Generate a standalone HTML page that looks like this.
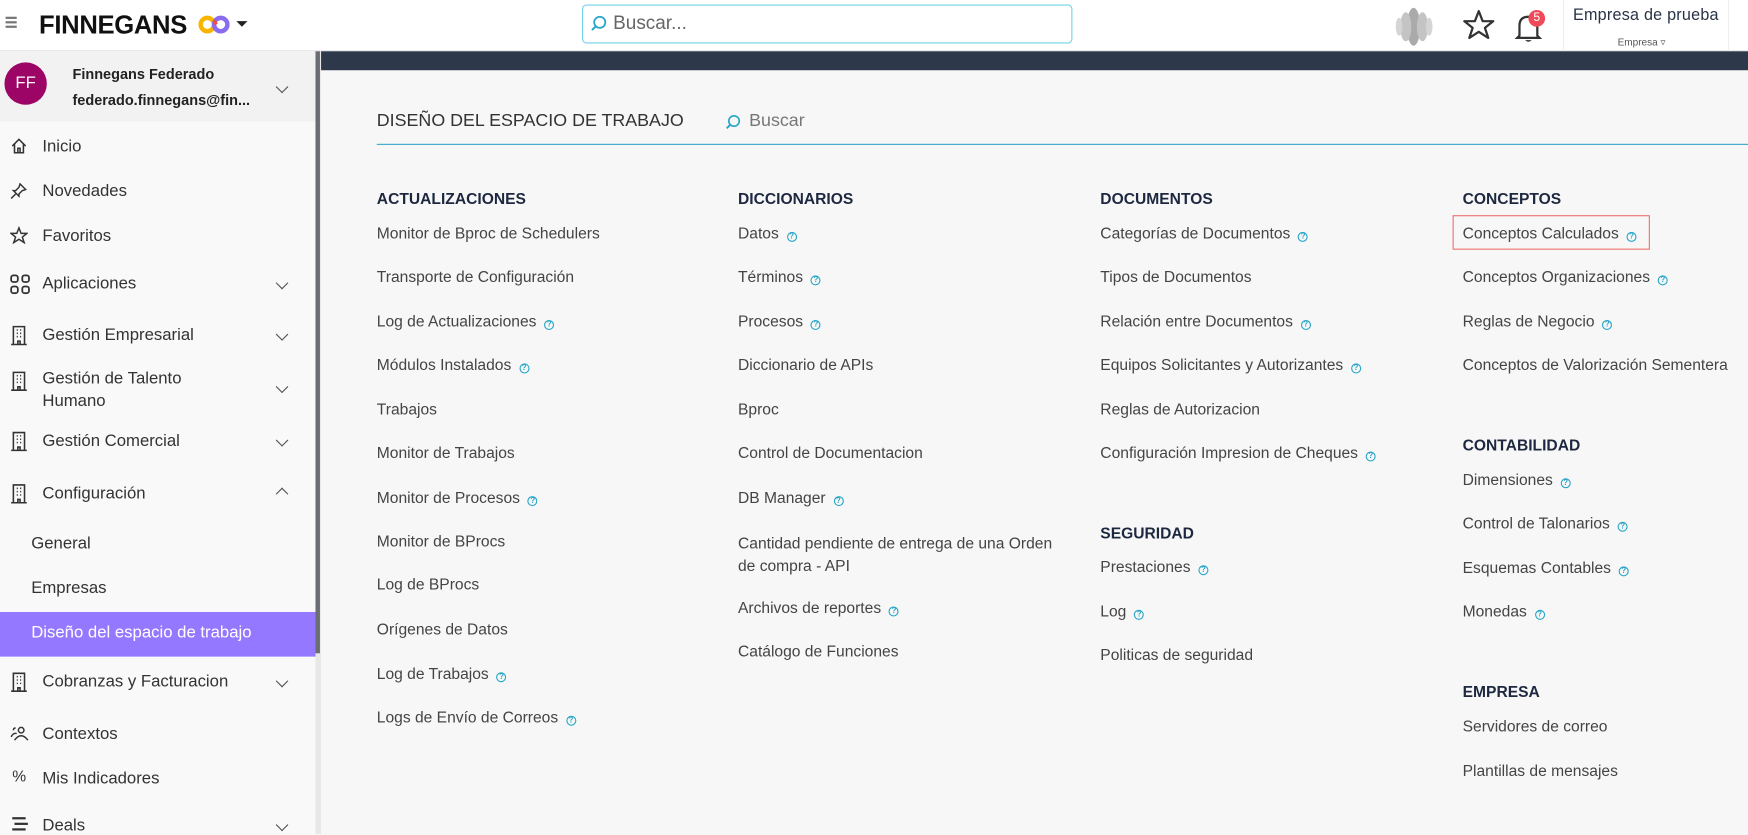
<!DOCTYPE html>
<html><head><meta charset="utf-8"><style>
*{margin:0;padding:0;box-sizing:border-box}
html,body{width:1748px;height:834px;overflow:hidden;background:#f7f7f7}
#w{position:absolute;left:0;top:0;width:1568px;height:748px;transform:scale(1.11480);transform-origin:0 0;font-family:"Liberation Sans",sans-serif;color:#333}
.a{position:absolute;white-space:nowrap}
.hd{position:absolute;left:0;top:0;width:1568px;height:46px;background:#fff;border-bottom:1px solid #e6e6e6}
.sb{position:absolute;left:0;top:46px;width:283px;height:702px;background:#f9f9f9}
.mi{position:absolute;font-size:15px;color:#333;white-space:nowrap;left:38px}
.ic{position:absolute;left:9px}
.ch{position:absolute;left:249px;width:8px;height:8px;border-right:1.6px solid #555;border-bottom:1.6px solid #555;transform:rotate(45deg)}
.h{position:absolute;font-size:14px;font-weight:bold;color:#1d2840;white-space:nowrap}
.it{position:absolute;font-size:14px;color:#444;white-space:nowrap}
.q{display:inline-block;width:9px;height:9px;border:1.2px solid #27a6c8;border-radius:50%;font-size:7px;line-height:7px;text-align:center;color:#27a6c8;margin-left:7px;vertical-align:0px;font-weight:bold}
</style></head><body><div id="w">
<div class="hd">
 <div class="a" style="left:5px;top:15px;width:10px;height:1.5px;background:#777;box-shadow:0 4px 0 #777,0 8px 0 #777"></div>
 <div class="a" style="left:35px;top:9px;font-size:23px;font-weight:bold;color:#111;letter-spacing:-0.3px">FINNEGANS</div>
 <svg class="a" style="left:178px;top:13px" width="28" height="18" viewBox="0 0 28 18"><circle cx="8" cy="9" r="6" fill="none" stroke="#f7b500" stroke-width="4"/><circle cx="20" cy="9" r="6" fill="none" stroke="#8a6cf0" stroke-width="4"/><path d="M14 5 L16 9" stroke="#f2503f" stroke-width="3"/></svg>
 <div class="a" style="left:212px;top:19px;border-left:5px solid transparent;border-right:5px solid transparent;border-top:5px solid #222"></div>
 <div class="a" style="left:522px;top:4px;width:440px;height:35px;border:1px solid #6fd3e6;border-radius:4px;background:#fff"></div>
 <svg class="a" style="left:529px;top:13px" width="16" height="16" viewBox="0 0 16 16"><circle cx="9" cy="7" r="5" fill="none" stroke="#27a6c8" stroke-width="1.6"/><path d="M5.5 10.5 L2 14" stroke="#27a6c8" stroke-width="1.8"/></svg>
 <div class="a" style="left:550px;top:11px;font-size:17px;color:#666">Buscar...</div>
 <svg class="a" style="left:1251px;top:5px" width="35" height="38" viewBox="0 0 35 38"><ellipse cx="17" cy="19" rx="6" ry="17" fill="#aaa"/><ellipse cx="10" cy="19" rx="5" ry="13" fill="#c4c4c4"/><ellipse cx="25" cy="19" rx="5" ry="13" fill="#c4c4c4"/><ellipse cx="4" cy="19" rx="3" ry="8" fill="#d5d5d5"/><ellipse cx="31" cy="19" rx="3" ry="8" fill="#d5d5d5"/></svg>
 <svg class="a" style="left:1312px;top:8px" width="29" height="28" viewBox="0 0 29 28"><path d="M14.5 2 L18 11 L27.5 11 L20 17 L23 26 L14.5 20.5 L6 26 L9 17 L1.5 11 L11 11 Z" fill="none" stroke="#333" stroke-width="2" stroke-linejoin="round"/></svg>
 <svg class="a" style="left:1358px;top:10px" width="28" height="30" viewBox="0 0 28 30"><path d="M5 22 L5 13 Q5 5 13 5 Q21 5 21 13 L21 22 L23 24 L3 24 Z" fill="none" stroke="#333" stroke-width="2"/><path d="M10 26 Q13 29 16 26" fill="#333"/></svg>
 <div class="a" style="left:1371px;top:9px;width:15px;height:15px;border-radius:50%;background:#f04a5a;color:#fff;font-size:11px;text-align:center;line-height:15px">5</div>
 <div class="a" style="left:1402px;top:0;width:1px;height:46px;background:#eee"></div>
 <div class="a" style="left:1411px;top:6px;font-size:14.5px;color:#2a3346;letter-spacing:0.2px">Empresa de prueba</div>
 <div class="a" style="left:1451px;top:33px;font-size:9px;color:#555">Empresa ▿</div>
 <div class="a" style="left:1550px;top:0;width:1px;height:46px;background:#eee"></div>
</div>
<div class="sb">
 <div class="a" style="left:0;top:0;width:283px;height:63px;background:#f2f2f2"></div>
 <div class="a" style="left:4px;top:10px;width:38px;height:38px;border-radius:50%;background:#9c0466;color:#fff;font-size:15px;text-align:center;line-height:38px">FF</div>
 <div class="a" style="left:65px;top:13px;font-size:13px;font-weight:bold;color:#222">Finnegans Federado</div>
 <div class="a" style="left:65px;top:36px;font-size:13px;font-weight:bold;color:#222">federado.finnegans@fin...</div>
 <div class="ch" style="top:28px"></div>
</div>
<div style="position:absolute;left:0;top:0">
 <svg class="ic" style="top:123px" width="16" height="16" viewBox="0 0 16 16"><path d="M2 8 L8 2 L14 8 M4 6 L4 14 L12 14 L12 6 M7 14 L7 10 L9 10 L9 14" fill="none" stroke="#333" stroke-width="1.4"/></svg>
 <div class="mi" style="top:123px">Inicio</div>
 <svg class="ic" style="top:163px" width="16" height="16" viewBox="0 0 16 16"><path d="M9 2 L14 7 L11 8 L8 11 L8 13 L3 8 L5 8 L8 5 Z M5 11 L1 15" fill="none" stroke="#333" stroke-width="1.3"/></svg>
 <div class="mi" style="top:163px">Novedades</div>
 <svg class="ic" style="top:203px" width="16" height="16" viewBox="0 0 29 28"><path d="M14.5 2 L18 11 L27.5 11 L20 17 L23 26 L14.5 20.5 L6 26 L9 17 L1.5 11 L11 11 Z" fill="none" stroke="#333" stroke-width="2.4"/></svg>
 <div class="mi" style="top:203px">Favoritos</div>
 <svg class="ic" style="top:246px" width="18" height="18" viewBox="0 0 18 18"><rect x="1" y="1" width="6" height="6" rx="2" fill="none" stroke="#333" stroke-width="1.6"/><rect x="11" y="1" width="6" height="6" rx="2" fill="none" stroke="#333" stroke-width="1.6"/><rect x="1" y="11" width="6" height="6" rx="2" fill="none" stroke="#333" stroke-width="1.6"/><rect x="11" y="11" width="6" height="6" rx="2" fill="none" stroke="#333" stroke-width="1.6"/></svg>
 <div class="mi" style="top:246px">Aplicaciones</div><div class="ch" style="top:250px"></div>
 <div class="mi" style="top:292px">Gestión Empresarial</div><div class="ch" style="top:296px"></div>
 <div class="mi" style="top:330px;line-height:20px">Gestión de Talento<br>Humano</div><div class="ch" style="top:343px"></div>
 <div class="mi" style="top:387px">Gestión Comercial</div><div class="ch" style="top:391px"></div>
 <div class="mi" style="top:434px">Configuración</div><div class="ch" style="top:439px;transform:rotate(225deg)"></div>
 <div class="mi" style="top:479px;left:28px">General</div>
 <div class="mi" style="top:519px;left:28px">Empresas</div>
 <div class="a" style="left:0;top:549px;width:283px;height:40px;background:#9478ff"></div>
 <div class="mi" style="top:559px;left:28px;color:#fff">Diseño del espacio de trabajo</div>
 <div class="mi" style="top:603px">Cobranzas y Facturacion</div><div class="ch" style="top:607px"></div>
 <svg class="ic" style="top:651px" width="18" height="14" viewBox="0 0 18 14"><circle cx="10" cy="4" r="2.5" fill="none" stroke="#333" stroke-width="1.3"/><path d="M4 13 Q10 5 16 13 M1 10 Q3 6 6 7 M5 2 Q3 2 3 4" fill="none" stroke="#333" stroke-width="1.3"/></svg>
 <div class="mi" style="top:650px">Contextos</div>
 <div class="a" style="left:11px;top:688px;font-size:14px;color:#333">%</div>
 <div class="mi" style="top:690px">Mis Indicadores</div>
 <div class="a" style="left:11px;top:733px;width:12px;height:2px;background:#333;box-shadow:2px 5px 0 #333,0 10px 0 #333"></div>
 <div class="mi" style="top:732px">Deals</div><div class="ch" style="top:736px"></div>
 <svg class="a" style="left:9px;top:292px" width="16" height="18" viewBox="0 0 16 18"><path d="M3 17 L3 1 L13 1 L13 17 M1 17 L15 17 M6 4h1M9 4h1M6 7h1M9 7h1M6 10h1M9 10h1M7 17v-3h2v3" fill="none" stroke="#333" stroke-width="1.4"/></svg>
 <svg class="a" style="left:9px;top:333px" width="16" height="18" viewBox="0 0 16 18"><path d="M3 17 L3 1 L13 1 L13 17 M1 17 L15 17 M6 4h1M9 4h1M6 7h1M9 7h1M6 10h1M9 10h1M7 17v-3h2v3" fill="none" stroke="#333" stroke-width="1.4"/></svg>
 <svg class="a" style="left:9px;top:387px" width="16" height="18" viewBox="0 0 16 18"><path d="M3 17 L3 1 L13 1 L13 17 M1 17 L15 17 M6 4h1M9 4h1M6 7h1M9 7h1M6 10h1M9 10h1M7 17v-3h2v3" fill="none" stroke="#333" stroke-width="1.4"/></svg>
 <svg class="a" style="left:9px;top:434px" width="16" height="18" viewBox="0 0 16 18"><path d="M3 17 L3 1 L13 1 L13 17 M1 17 L15 17 M6 4h1M9 4h1M6 7h1M9 7h1M6 10h1M9 10h1M7 17v-3h2v3" fill="none" stroke="#333" stroke-width="1.4"/></svg>
 <svg class="a" style="left:9px;top:603px" width="16" height="18" viewBox="0 0 16 18"><path d="M3 17 L3 1 L13 1 L13 17 M1 17 L15 17 M6 4h1M9 4h1M6 7h1M9 7h1M6 10h1M9 10h1M7 17v-3h2v3" fill="none" stroke="#333" stroke-width="1.4"/></svg>
</div>
<div class="a" style="left:283px;top:46px;width:5px;height:702px;background:#e8e8e8"></div>
<div class="a" style="left:283px;top:46px;width:4px;height:540px;background:#6a6d72"></div>
<div class="a" style="left:288px;top:46px;width:1280px;height:17px;background:#2d394b"></div>
<div class="a" style="left:338px;top:100px;font-size:16px;color:#333">DISEÑO DEL ESPACIO DE TRABAJO</div>
<svg class="a" style="left:650px;top:102px" width="15" height="15" viewBox="0 0 16 16"><circle cx="9" cy="7" r="5" fill="none" stroke="#27a6c8" stroke-width="1.6"/><path d="M5.5 10.5 L2 14" stroke="#27a6c8" stroke-width="1.8"/></svg>
<div class="a" style="left:672px;top:100px;font-size:16px;color:#777">Buscar</div>
<div class="a" style="left:338px;top:129px;width:1230px;height:1px;background:#3aa8c8"></div>

<div class="h" style="left:338px;top:170px">ACTUALIZACIONES</div>
<div class="it" style="left:338px;top:201px">Monitor de Bproc de Schedulers</div>
<div class="it" style="left:338px;top:240px">Transporte de Configuración</div>
<div class="it" style="left:338px;top:280px">Log de Actualizaciones<span class="q">?</span></div>
<div class="it" style="left:338px;top:319px">Módulos Instalados<span class="q">?</span></div>
<div class="it" style="left:338px;top:359px">Trabajos</div>
<div class="it" style="left:338px;top:398px">Monitor de Trabajos</div>
<div class="it" style="left:338px;top:438px">Monitor de Procesos<span class="q">?</span></div>
<div class="it" style="left:338px;top:477px">Monitor de BProcs</div>
<div class="it" style="left:338px;top:516px">Log de BProcs</div>
<div class="it" style="left:338px;top:556px">Orígenes de Datos</div>
<div class="it" style="left:338px;top:596px">Log de Trabajos<span class="q">?</span></div>
<div class="it" style="left:338px;top:635px">Logs de Envío de Correos<span class="q">?</span></div>

<div class="h" style="left:662px;top:170px">DICCIONARIOS</div>
<div class="it" style="left:662px;top:201px">Datos<span class="q">?</span></div>
<div class="it" style="left:662px;top:240px">Términos<span class="q">?</span></div>
<div class="it" style="left:662px;top:280px">Procesos<span class="q">?</span></div>
<div class="it" style="left:662px;top:319px">Diccionario de APIs</div>
<div class="it" style="left:662px;top:359px">Bproc</div>
<div class="it" style="left:662px;top:398px">Control de Documentacion</div>
<div class="it" style="left:662px;top:438px">DB Manager<span class="q">?</span></div>
<div class="it" style="left:662px;top:477px;line-height:20px">Cantidad pendiente de entrega de una Orden<br>de compra - API</div>
<div class="it" style="left:662px;top:537px">Archivos de reportes<span class="q">?</span></div>
<div class="it" style="left:662px;top:576px">Catálogo de Funciones</div>

<div class="h" style="left:987px;top:170px">DOCUMENTOS</div>
<div class="it" style="left:987px;top:201px">Categorías de Documentos<span class="q">?</span></div>
<div class="it" style="left:987px;top:240px">Tipos de Documentos</div>
<div class="it" style="left:987px;top:280px">Relación entre Documentos<span class="q">?</span></div>
<div class="it" style="left:987px;top:319px">Equipos Solicitantes y Autorizantes<span class="q">?</span></div>
<div class="it" style="left:987px;top:359px">Reglas de Autorizacion</div>
<div class="it" style="left:987px;top:398px">Configuración Impresion de Cheques<span class="q">?</span></div>
<div class="h" style="left:987px;top:470px">SEGURIDAD</div>
<div class="it" style="left:987px;top:500px">Prestaciones<span class="q">?</span></div>
<div class="it" style="left:987px;top:540px">Log<span class="q">?</span></div>
<div class="it" style="left:987px;top:579px">Politicas de seguridad</div>

<div class="h" style="left:1312px;top:170px">CONCEPTOS</div>
<div class="a" style="left:1303px;top:193px;width:177px;height:31px;border:1.5px solid #f07070"></div>
<div class="it" style="left:1312px;top:201px">Conceptos Calculados<span class="q">?</span></div>
<div class="it" style="left:1312px;top:240px">Conceptos Organizaciones<span class="q">?</span></div>
<div class="it" style="left:1312px;top:280px">Reglas de Negocio<span class="q">?</span></div>
<div class="it" style="left:1312px;top:319px">Conceptos de Valorización Sementera</div>
<div class="h" style="left:1312px;top:391px">CONTABILIDAD</div>
<div class="it" style="left:1312px;top:422px">Dimensiones<span class="q">?</span></div>
<div class="it" style="left:1312px;top:461px">Control de Talonarios<span class="q">?</span></div>
<div class="it" style="left:1312px;top:501px">Esquemas Contables<span class="q">?</span></div>
<div class="it" style="left:1312px;top:540px">Monedas<span class="q">?</span></div>
<div class="h" style="left:1312px;top:612px">EMPRESA</div>
<div class="it" style="left:1312px;top:643px">Servidores de correo</div>
<div class="it" style="left:1312px;top:683px">Plantillas de mensajes</div>
</div></body></html>
